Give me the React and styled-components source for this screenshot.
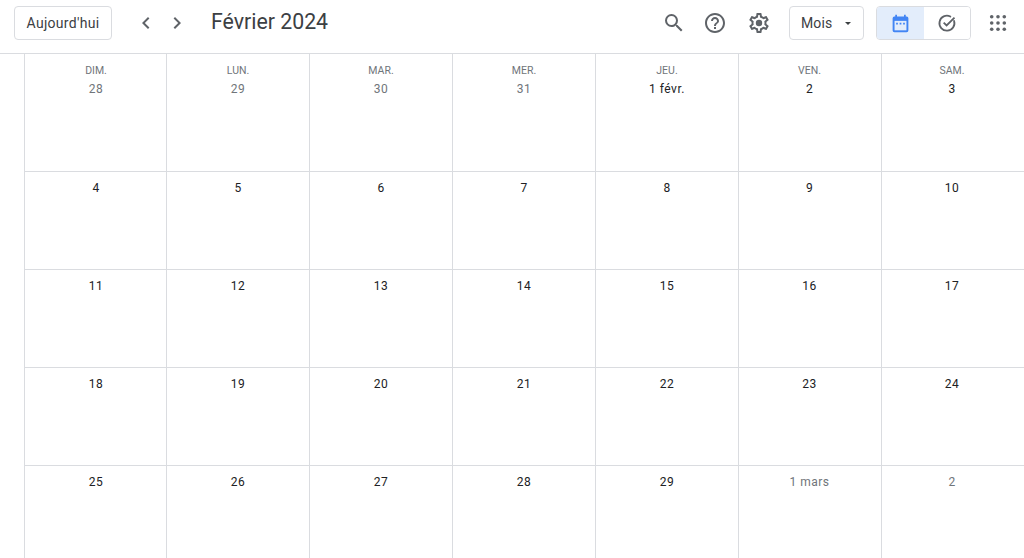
import React from "react";
import styled, { createGlobalStyle } from "styled-components";

const GlobalStyle = createGlobalStyle`
  html, body {
    margin: 0;
    padding: 0;
    background: #fff;
    font-family: Roboto, "Liberation Sans", sans-serif;
    overflow: hidden;
  }
`;

const Page = styled.div`
  width: 1024px;
  height: 558px;
  display: flex;
  flex-direction: column;
  overflow: hidden;
`;

const Toolbar = styled.div`
  height: 54px;
  box-sizing: border-box;
  flex-shrink: 0;
  display: flex;
  align-items: flex-start;
  padding: 6px 0 0 14px;
  border-bottom: 1px solid #dadce0;
`;

const OutlineButton = styled.div`
  height: 34px;
  box-sizing: border-box;
  border: 1px solid #dadce0;
  border-radius: 4px;
  display: flex;
  align-items: center;
  font-size: 14px;
  font-weight: 400;
  color: #3c4043;
  letter-spacing: 0.3px;
`;

const TodayButton = styled(OutlineButton)`
  width: 98px;
  justify-content: center;
`;

const NavGroup = styled.div`
  display: flex;
  gap: 7px;
  margin-left: 22px;
  height: 34px;
  align-items: center;
`;

const IconSlot = styled.div`
  width: 24px;
  height: 24px;
  margin-left: ${({ $gap }) => $gap || 0}px;
  display: flex;
  align-items: center;
  justify-content: center;
  flex-shrink: 0;
`;

const AppsSlot = styled(IconSlot)`
  margin-left: 15px;
  margin-right: 14px;
`;

const Title = styled.div`
  margin-left: 22px;
  font-size: 21.3px;
  line-height: 32px;
  color: #3c4043;
`;

const Actions = styled.div`
  margin-left: auto;
  display: flex;
  align-items: center;
  height: 34px;
`;

const ViewSelect = styled(OutlineButton)`
  width: 75px;
  margin-left: 18px;
  padding-left: 11px;
  gap: 13px;
  letter-spacing: 0.1px;
`;

const Caret = styled.span`
  width: 0;
  height: 0;
  border-left: 3.5px solid transparent;
  border-right: 3.5px solid transparent;
  border-top: 3.5px solid #3c4043;
  margin-top: 1px;
`;

const Toggle = styled.div`
  width: 95px;
  height: 34px;
  box-sizing: border-box;
  margin-left: 12px;
  border: 1px solid #dadce0;
  border-radius: 4px;
  display: flex;
  overflow: hidden;
`;

const ToggleItem = styled.div`
  flex: 1;
  display: flex;
  align-items: center;
  justify-content: center;
  background: ${({ $active }) => ($active ? "#e3edfb" : "#fff")};
`;

const Grid = styled.div`
  flex: 1;
  margin-left: 24px;
  display: grid;
  grid-template-columns: 142px repeat(6, 143px);
  grid-template-rows: 118px repeat(3, 98px) 1fr;
`;

const Cell = styled.div`
  border-left: 1px solid #dadce0;
  border-bottom: 1px solid #dadce0;
  display: flex;
  flex-direction: column;
  align-items: center;
  padding-top: ${({ $first }) => ($first ? 11 : 8)}px;
  &:nth-last-child(-n + 7) {
    border-bottom: none;
  }
  &:nth-child(7n + 1) {
    padding-left: 1px;
  }
  &:nth-child(7n + 6) {
    padding-right: 1px;
  }
  &:nth-child(7n) {
    padding-right: 2px;
  }
`;

const Weekday = styled.div`
  font-size: 10.5px;
  line-height: 12px;
  font-weight: 400;
  color: #70757a;
  margin-bottom: 4px;
`;

const DayNumber = styled.div`
  font-size: 12px;
  line-height: 16px;
  font-weight: 400;
  letter-spacing: 0.5px;
  color: ${({ $muted }) => ($muted ? "#70757a" : "#202124")};
`;

const Chevron = ({ d }) => (
  <svg width="24" height="24" viewBox="0 0 24 24" fill="#5f6368">
    <path d={d} />
  </svg>
);

const SearchIcon = () => (
  <svg width="24" height="24" viewBox="0 0 24 24" fill="#5f6368">
    <path d="M15.5 14h-.79l-.28-.27A6.47 6.47 0 0 0 16 9.5 6.5 6.5 0 1 0 9.5 16c1.61 0 3.09-.59 4.23-1.57l.27.28v.79l5 4.99L20.49 19l-4.99-5zm-6 0C7.01 14 5 11.99 5 9.5S7.01 5 9.5 5 14 7.01 14 9.5 11.99 14 9.5 14z" />
  </svg>
);

const HelpIcon = () => (
  <svg width="24" height="24" viewBox="0 0 24 24" fill="#5f6368">
    <path d="M11 18h2v-2h-2v2zm1-16C6.48 2 2 6.48 2 12s4.48 10 10 10 10-4.48 10-10S17.52 2 12 2zm0 18c-4.41 0-8-3.59-8-8s3.59-8 8-8 8 3.59 8 8-3.59 8-8 8zm0-14c-2.21 0-4 1.79-4 4h2c0-1.1.9-2 2-2s2 .9 2 2c0 2-3 1.75-3 5h2c0-2.25 3-2.5 3-5 0-2.21-1.79-4-4-4z" />
  </svg>
);

const GearIcon = () => (
  <svg width="24" height="24" viewBox="0 0 24 24" fill="#5f6368">
    <path d="M19.43 12.98c.04-.32.07-.64.07-.98s-.03-.66-.07-.98l2.11-1.65c.19-.15.24-.42.12-.64l-2-3.46c-.12-.22-.39-.3-.61-.22l-2.49 1c-.52-.4-1.08-.73-1.69-.98l-.38-2.65A.49.49 0 0 0 14 2h-4c-.25 0-.46.18-.49.42l-.38 2.65c-.61.25-1.17.59-1.69.98l-2.49-1a.5.5 0 0 0-.61.22l-2 3.46c-.13.22-.07.49.12.64l2.11 1.65c-.04.32-.07.65-.07.98s.03.66.07.98l-2.11 1.65c-.19.15-.24.42-.12.64l2 3.46c.12.22.39.3.61.22l2.49-1c.52.4 1.08.73 1.69.98l.38 2.65c.03.24.24.42.49.42h4c.25 0 .46-.18.49-.42l.38-2.65c.61-.25 1.17-.59 1.69-.98l2.49 1c.23.09.49 0 .61-.22l2-3.46c.12-.22.07-.49-.12-.64l-2.11-1.65zM17.45 11.27c.04.31.05.52.05.73s-.02.43-.05.73l-.14 1.13.89.7 1.08.84-.7 1.21-1.27-.51-1.04-.42-.9.68c-.43.32-.84.56-1.25.73l-1.06.43-.16 1.13-.2 1.35h-1.4l-.19-1.35-.16-1.13-1.06-.43c-.43-.18-.83-.41-1.23-.71l-.91-.7-1.06.43-1.27.51-.7-1.21 1.08-.84.89-.7-.14-1.13c-.03-.31-.05-.54-.05-.74s.02-.43.05-.73l.14-1.13-.89-.7-1.08-.84.7-1.21 1.27.51 1.04.42.9-.68c.43-.32.84-.56 1.25-.73l1.06-.43.16-1.13.2-1.35h1.39l.19 1.35.16 1.13 1.06.43c.43.18.83.41 1.23.71l.91.7 1.06-.43 1.27-.51.7 1.21-1.07.85-.89.7.14 1.13z" />
    <circle cx="12" cy="12" r="3.2" />
  </svg>
);

const CalendarIcon = () => (
  <svg width="21" height="21" viewBox="0 0 24 24">
    <path
      fill="#4285f4"
      d="M19 4h-1V2h-2v2H8V2H6v2H5a2 2 0 0 0-2 2v14a2 2 0 0 0 2 2h14a2 2 0 0 0 2-2V6a2 2 0 0 0-2-2z"
    />
    <rect x="5.2" y="9" width="13.6" height="10.8" fill="#e3edfb" />
    <path fill="#4285f4" d="M7 11h2v2H7zM11 11h2v2h-2zM15 11h2v2h-2z" />
  </svg>
);

const TaskIcon = () => (
  <svg width="20" height="20" viewBox="0 0 24 24" fill="none" stroke="#5f6368" strokeWidth="2.2">
    <path d="M20.5 9.5A9 9 0 1 1 16 4.2" strokeLinecap="round" />
    <path d="M8 11.5l3.5 3.5L21 5.5" />
  </svg>
);

const AppsIcon = () => (
  <svg width="24" height="24" viewBox="0 0 24 24" fill="#5f6368">
    {[5.7, 12, 18.3].map((y) =>
      [5.7, 12, 18.3].map((x) => <circle key={`${x}-${y}`} cx={x} cy={y} r="1.8" />)
    )}
  </svg>
);

const weekdays = ["DIM.", "LUN.", "MAR.", "MER.", "JEU.", "VEN.", "SAM."];

const days = [
  { label: "28", muted: true },
  { label: "29", muted: true },
  { label: "30", muted: true },
  { label: "31", muted: true },
  { label: "1 févr." },
  ...Array.from({ length: 28 }, (_, i) => ({ label: String(i + 2) })),
  { label: "1 mars", muted: true },
  { label: "2", muted: true },
];

const App = () => {
  return (
    <Page>
      <GlobalStyle />
      <Toolbar>
        <TodayButton>Aujourd'hui</TodayButton>
        <NavGroup>
          <IconSlot>
            <Chevron d="M15.41 7.41 14 6l-6 6 6 6 1.41-1.41L10.83 12z" />
          </IconSlot>
          <IconSlot>
            <Chevron d="M10 6 8.59 7.41 13.17 12l-4.58 4.59L10 18l6-6z" />
          </IconSlot>
        </NavGroup>
        <Title>Février 2024</Title>
        <Actions>
          <IconSlot>
            <SearchIcon />
          </IconSlot>
          <IconSlot $gap={17}>
            <HelpIcon />
          </IconSlot>
          <IconSlot $gap={20}>
            <GearIcon />
          </IconSlot>
          <ViewSelect>
            Mois
            <Caret />
          </ViewSelect>
          <Toggle>
            <ToggleItem $active>
              <CalendarIcon />
            </ToggleItem>
            <ToggleItem>
              <TaskIcon />
            </ToggleItem>
          </Toggle>
          <AppsSlot>
            <AppsIcon />
          </AppsSlot>
        </Actions>
      </Toolbar>
      <Grid>
        {days.map((day, i) => (
          <Cell key={i} $first={i < 7}>
            {i < 7 && <Weekday>{weekdays[i]}</Weekday>}
            <DayNumber $muted={day.muted}>{day.label}</DayNumber>
          </Cell>
        ))}
      </Grid>
    </Page>
  );
};

export default App;
